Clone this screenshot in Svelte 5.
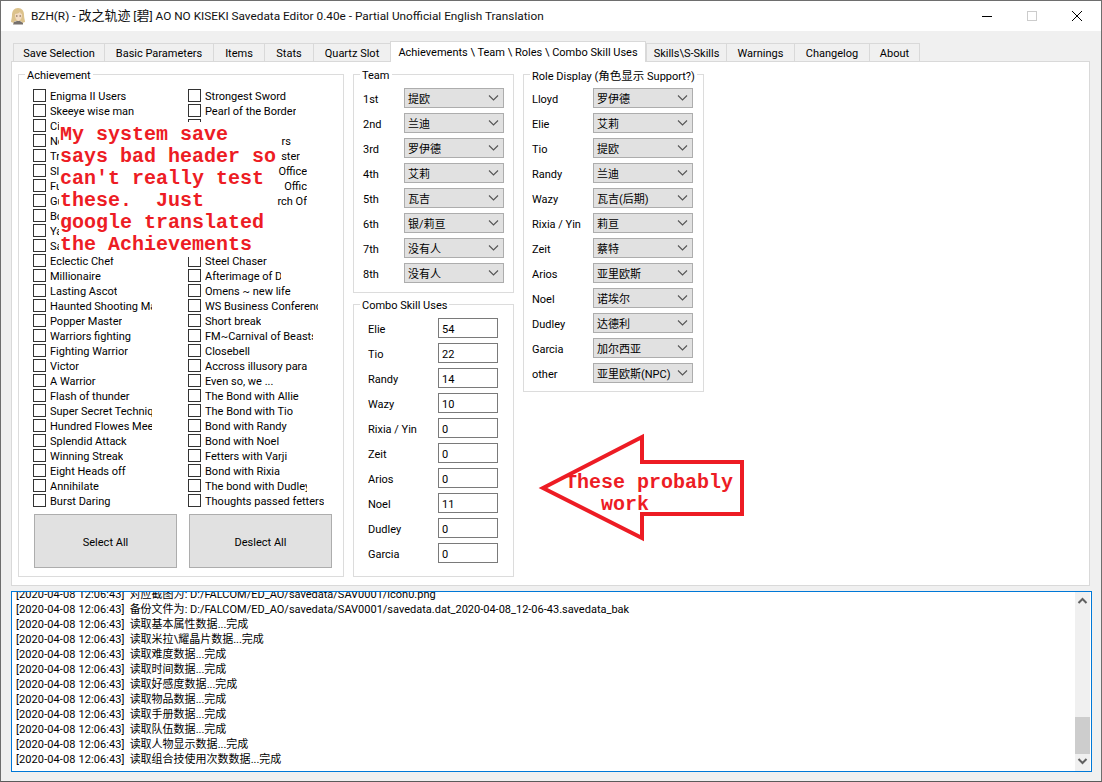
<script>
  const tabs = ['Save Selection','Basic Parameters','Items','Stats','Quartz Slot','Achievements \\ Team \\ Roles \\ Combo Skill Uses','Skills\\S-Skills','Warnings','Changelog','About'];
  const ach = [
    ['Enigma II Users'],['Strongest Sword'],['Skeeye wise man'],['Pearl of the Border'],
    ['Ci'],[''],['No'],['rs',86,1],['Tr'],['ster',95,1],['Sl'],['Office',102,1],['Fu'],['Offic',102,1],['Gu'],['rch Of',102,1],
    ['Bo'],[''],['Ya'],[''],['Sa'],[''],['Eclectic Chef'],['Steel Chaser'],
    ['Millionaire'],['Afterimage of D',76],['Lasting Ascot'],['Omens ~ new life'],
    ['Haunted Shooting Master',102],['WS Business Conference',113],['Popper Master'],['Short break'],
    ['Warriors fighting'],['FM~Carnival of Beasts',108],['Fighting Warrior'],['Closebell'],
    ['Victor'],['Accross illusory paradise',102],['A Warrior'],['Even so, we ...'],
    ['Flash of thunder'],['The Bond with Allie'],['Super Secret Technique',102],['The Bond with Tio'],
    ['Hundred Flowes Meet',102],['Bond with Randy'],['Splendid Attack'],['Bond with Noel'],
    ['Winning Streak'],['Fetters with Varji'],['Eight Heads off'],['Bond with Rixia'],
    ['Annihilate'],['The bond with Dudley',102],['Burst Daring'],['Thoughts passed fetters']
  ];
  const team = [['1st','提欧'],['2nd','兰迪'],['3rd','罗伊德'],['4th','艾莉'],['5th','瓦吉'],['6th','银/莉亘'],['7th','没有人'],['8th','没有人']];
  const roles = [['Lloyd','罗伊德'],['Elie','艾莉'],['Tio','提欧'],['Randy','兰迪'],['Wazy','瓦吉(后期)'],['Rixia / Yin','莉亘'],['Zeit','蔡特'],['Arios','亚里欧斯'],['Noel','诺埃尔'],['Dudley','达德利'],['Garcia','加尔西亚'],['other','亚里欧斯(NPC)']];
  const combo = [['Elie','54'],['Tio','22'],['Randy','14'],['Wazy','10'],['Rixia / Yin','0'],['Zeit','0'],['Arios','0'],['Noel','11'],['Dudley','0'],['Garcia','0']];
  const stamp = '[2020-04-08 12:06:43]';
  const log = ['对应截图为: D:/FALCOM/ED_AO/savedata/SAV0001/icon0.png','备份文件为: D:/FALCOM/ED_AO/savedata/SAV0001/savedata.dat_2020-04-08_12-06-43.savedata_bak','读取基本属性数据...完成','读取米拉\\耀晶片数据...完成','读取难度数据...完成','读取时间数据...完成','读取好感度数据...完成','读取物品数据...完成','读取手册数据...完成','读取队伍数据...完成','读取人物显示数据...完成','读取组合技使用次数数据...完成'];
  const runs = (s) => s.match(/[\u4e00-\u9fff]+|[^\u4e00-\u9fff]+/g) ?? [];
  const isCjk = (s) => /[\u4e00-\u9fff]/.test(s);
</script>

{#snippet mixed(s)}{#each runs(s) as r}<span class:cjk={isCjk(r)}>{r}</span>{/each}{/snippet}
{#snippet chev()}<svg class="chev" width="11" height="6" viewBox="0 0 11 6"><path d="M1 .5l4.500 4.500L10 .5" fill="none" stroke="#555" stroke-width="1.1"/></svg>{/snippet}

<div class="window">
  <header class="titlebar">
    <svg class="appicon" width="16" height="18" viewBox="0 0 16 18">
      <path d="M8 1C4 1 2 4 2 8c0 3-1 5-1 7l3 1 1-2h6l1 2 3-1c0-2-1-4-1-7 0-4-2-7-6-7z" fill="#dcc28c"/>
      <path d="M5 7c2 0 4-1 5-2 .5 1 1 2 2 2 0 4-1 6-3.500 7C6 13.500 5 11 5 7z" fill="#f3dcc4"/>
      <path d="M4 15l3-1h3l3 2v1.500H3z" fill="#77716c"/>
      <path d="M6 9h1.500M9.500 9H11" stroke="#6a5240" stroke-width="1"/>
    </svg>
    <span class="title">{@render mixed('BZH(R) - 改之轨迹 [碧] AO NO KISEKI Savedata Editor 0.40e - Partial Unofficial English Translation')}</span>
    <div class="controls">
      <span class="ctl"><svg width="12" height="12" viewBox="0 0 12 12"><path d="M1 6.500h10" stroke="#000"/></svg></span>
      <span class="ctl"><svg width="12" height="12" viewBox="0 0 12 12"><rect x="1.500" y="1.500" width="9" height="9" fill="none" stroke="#ccc"/></svg></span>
      <span class="ctl"><svg width="12" height="12" viewBox="0 0 12 12"><path d="M1 1l10 10M11 1L1 11" stroke="#000" stroke-width="1"/></svg></span>
    </div>
  </header>

  <main class="client">
    <nav class="tabs">
      {#each tabs as t, i}<div class="tab" class:active={i === 5}>{t}</div>{/each}
    </nav>

    <section class="panel">
      <div class="group achievements">
        <span class="legend">Achievement</span>
        <div class="checks">
          {#each ach as [t, w, r]}
            <div class="check">
              <span class="box"></span>
              <span class="lbl" class:right={r} style:width={w ? w + 'px' : null}>{t}</span>
            </div>
          {/each}
        </div>
        <div class="btns">
          <button>Select All</button>
          <button>Deslect All</button>
        </div>
      </div>

      <div class="col">
        <div class="group team">
          <span class="legend">Team</span>
          {#each team as [l, v]}
            <div class="row"><span class="rl">{l}</span><div class="select"><span class="val">{@render mixed(v)}</span>{@render chev()}</div></div>
          {/each}
        </div>
        <div class="group combo">
          <span class="legend">Combo Skill Uses</span>
          {#each combo as [l, v]}
            <div class="row"><span class="rl">{l}</span><div class="input">{v}</div></div>
          {/each}
        </div>
      </div>

      <div class="group roles">
        <span class="legend rolelegend">Role Display ({@render mixed('角色显示')} Support?)</span>
        {#each roles as [l, v]}
          <div class="row"><span class="rl">{l}</span><div class="select"><span class="val">{@render mixed(v)}</span>{@render chev()}</div></div>
        {/each}
      </div>

      <div class="note">My system save
says bad header so
can't really test
these.  Just
google translated
the Achievements</div>

      <svg class="arrow" width="212" height="112" viewBox="0 0 212 112">
        <path d="M5 55L104 4V29H204V81H104V105Z" fill="#fff" stroke="#ed1c24" stroke-width="4"/>
      </svg>
      <div class="arrowtext">These probably
   work</div>
    </section>

    <section class="log">
      <div class="lines">
        {#each log as l}<div class="line"><span class="stamp">{stamp}</span>{@render mixed(l)}</div>{/each}
      </div>
      <div class="scroll">
        <svg width="15" height="9" viewBox="0 0 15 9"><path d="M3.500 7l4-4 4 4" fill="none" stroke="#606060" stroke-width="2"/></svg>
        <div class="thumb"></div>
        <svg width="15" height="9" viewBox="0 0 15 9"><path d="M3.500 2l4 4 4-4" fill="none" stroke="#606060" stroke-width="2"/></svg>
      </div>
    </section>
  </main>
</div>

<style>
  :global(body) { margin: 0; background: #f0f0f0; }
  .window, .window * { box-sizing: border-box; }
  .window {
    width: 1102px; height: 782px; display: flex; flex-direction: column;
    border: 1px solid #6e6e6e; border-bottom-color: #5a5a5a;
    font: 11px/15px Roboto, "Noto Sans CJK SC", sans-serif; color: #000;
  }
  .cjk { font-size: 11px; font-family: "Noto Sans CJK SC", sans-serif; }
  .titlebar { height: 30px; background: #fff; display: flex; align-items: center; flex: none; }
  .appicon { margin-left: 9px; margin-right: 5px; }
  .title { font-size: 11.8px; color: #111; margin-top: -2px; }
  .title .cjk { font-size: 13px; }
  .rolelegend .cjk { font-size: 11.5px; }
  .controls { margin-left: auto; display: flex; margin-right: 18px; gap: 33px; }
  .ctl { width: 12px; height: 12px; display: block; }
  .ctl svg { display: block; }
  .client { flex: 1; background: #f0f0f0; padding: 12px 9px 0 10px; display: flex; flex-direction: column; }
  .tabs {
    display: grid; height: 18px; align-items: end; margin-left: 2px; grid-template-rows: 18px;
    grid-template-columns: 91px 109px 51px 49px 77px 256px 80px 68px 75px 51px;
  }
  .tab {
    height: 18px; border: 1px solid #d9d9d9; border-bottom: 0; border-right: 0; background: #f0f0f0;
    text-align: center; line-height: 20px; white-space: nowrap; overflow: hidden;
  }
  .tab:last-child { border-right: 1px solid #d9d9d9; }
  .tab.active {
    height: 21px; margin-bottom: -1px; background: #fff; border-right: 1px solid #d9d9d9;
    position: relative; z-index: 1; line-height: 21px;
  }
  .panel {
    position: relative; height: 525px; width: 1079px; background: #fff; border: 1px solid #d9d9d9;
    padding: 12px 0 0 6px; display: flex; gap: 9px; align-items: flex-start;
  }
  .group { position: relative; border: 1px solid #dcdcdc; }
  .legend {
    position: absolute; top: -7px; left: 6px; padding: 0 2px; background: #fff; line-height: 15px; white-space: nowrap;
  }
  .achievements { width: 326px; height: 503px; padding: 14px 0 0 14px; }
  .checks { display: grid; grid-template-columns: 155px 130px; grid-auto-rows: 15px; }
  .check { display: flex; align-items: flex-start; height: 15px; min-width: 0; }
  .box { width: 13px; height: 13px; border: 1px solid #333; background: #fff; flex: none; margin-right: 4px; }
  .lbl { display: block; white-space: nowrap; overflow: hidden; line-height: 14px; margin-top: 1px; flex: none; }
  .lbl.right { text-align: right; }
  .btns { display: flex; gap: 12px; margin: 5px 0 0 1px; }
  button {
    width: 143px; height: 54px; background: #e1e1e1; border: 1px solid #adadad; font: inherit; color: #000; padding: 2px 0 0;
  }
  .col { display: flex; flex-direction: column; gap: 11px; width: 161px; }
  .team { padding: 13px 0 9px 9px; display: flex; flex-direction: column; gap: 5px; }
  .team .rl { width: 41px; }
  .combo { height: 273px; padding: 13px 0 0 14px; display: flex; flex-direction: column; gap: 5px; }
  .combo .rl { width: 70px; }
  .roles { width: 181px; padding: 13px 0 8px 8px; display: flex; flex-direction: column; gap: 5px; }
  .roles .rl { width: 61px; }
  .row { display: flex; align-items: center; height: 20px; }
  .rl { flex: none; white-space: nowrap; padding-top: 2px; }
  .select {
    width: 100px; height: 20px; background: #e1e1e1; border: 1px solid #adadad; padding: 0 4px 0 3px;
    display: flex; align-items: center; justify-content: space-between;
  }
  .val { padding-top: 2px; }
  .input { width: 60px; height: 20px; border: 1px solid #7a7a7a; padding-left: 3px; line-height: 21px; background: #fff; }
  .note, .arrowtext {
    position: absolute; font: bold 20px/22px "Liberation Mono", monospace; color: #ed1c24; white-space: pre;
  }
  .note { left: 47px; top: 60px; width: 218px; height: 135px; background: #fff; padding-left: 1px; padding-top: 2px; }
  .arrow { position: absolute; left: 526px; top: 371px; }
  .arrowtext { left: 553px; top: 410px; }
  .log {
    margin-top: 5px; width: 1081px; height: 181px; background: #fff; border: 1px solid #0078d7;
    display: flex; overflow: hidden;
  }
  .lines { flex: 1; margin-top: -6px; padding-left: 4px; }
  .line { height: 15px; white-space: nowrap; }
  .stamp { margin-right: 5px; letter-spacing: .1px; }
  .scroll {
    width: 15px; margin-right: 1px; background: #f0f0f0; display: flex; flex-direction: column; align-items: center; justify-content: space-between;
    position: relative; padding: 4px 0 5px;
  }
  .scroll svg { display: block; }
  .thumb { position: absolute; left: 0; right: 0; top: 125px; height: 37px; background: #cdcdcd; }
</style>
